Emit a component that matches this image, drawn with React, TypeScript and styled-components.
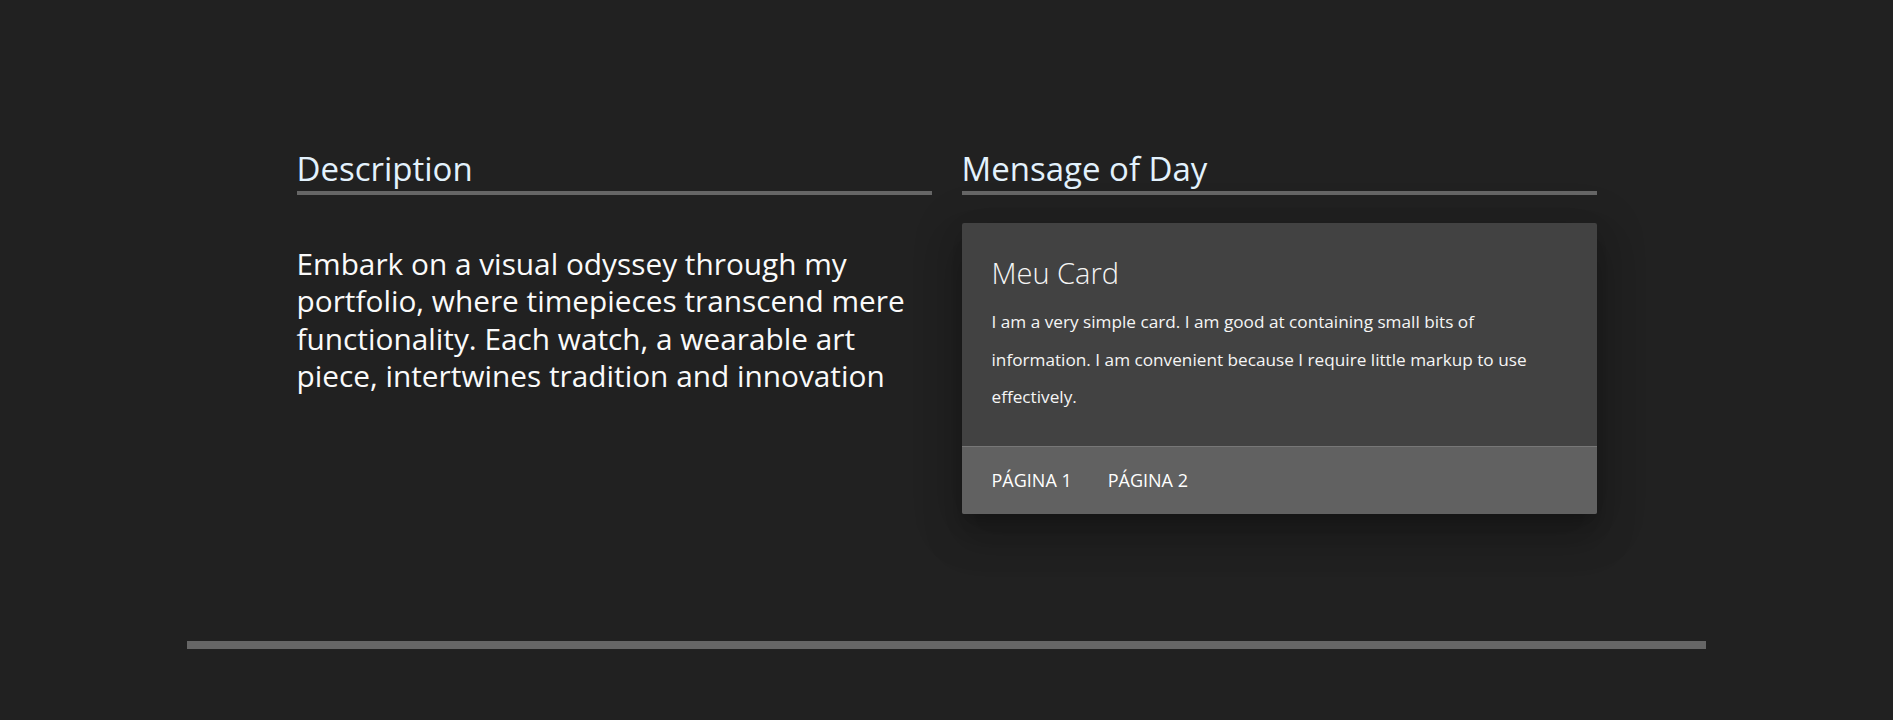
import styled, { createGlobalStyle } from "styled-components";

const GlobalStyle = createGlobalStyle`
  html,
  body {
    margin: 0;
    padding: 0;
    background: #212121;
  }

  body {
    font-family: "Open Sans", "Noto Sans", "Liberation Sans", sans-serif;
    color: #ffffff;
  }

  * {
    box-sizing: border-box;
  }
`;

export const PageWrapp = styled.div`
  min-height: 100vh;
  background: #212121;
  padding-top: 150px;
  padding-bottom: 71px;
`;

export const PageSections = styled.main`
  width: 1300px;
  margin: 0 auto;
  display: grid;
  grid-template-columns: 635px 635px;
  column-gap: 30px;
  align-items: start;
`;

export const Section = styled.section`
  display: flex;
  flex-direction: column;
`;

export const SectionTitle = styled.h4`
  margin: 0;
  padding-bottom: 3px;
  font-size: 33px;
  font-weight: 400;
  line-height: 38px;
  color: #e3f2fd;
  border-bottom: 4px solid #666666;
`;

export const SectionText = styled.p<{ $offset: number }>`
  margin: ${({ $offset }) => $offset}px 0 0;
  font-size: 29.8px;
  line-height: 37.4px;
  color: #fafafa;
`;

export const Card = styled.div`
  margin-top: 28px;
  background: #424242;
  border-radius: 2px;
  overflow: hidden;
  box-shadow: 0 24px 38px 3px rgba(0, 0, 0, 0.16),
    0 9px 46px 8px rgba(0, 0, 0, 0.14), 0 11px 15px -7px rgba(0, 0, 0, 0.22);
`;

export const CardContent = styled.div`
  padding: 30px;
`;

export const CardTitle = styled.span`
  display: block;
  margin-bottom: 10px;
  font-size: 29px;
  font-weight: 300;
  line-height: 40px;
  color: #f5f5f5;
`;

export const CardText = styled.p`
  margin: 0;
  font-size: 17.2px;
  line-height: 37.5px;
  color: #f5f5f5;
`;

export const CardAction = styled.div`
  display: flex;
  align-items: center;
  padding: 20px 30px;
  background: #616161;
  border-top: 1px solid rgba(160, 160, 160, 0.35);
`;

export const CardLink = styled.a`
  margin-right: 36px;
  font-size: 18px;
  line-height: 27px;
  text-transform: uppercase;
  text-decoration: none;
  color: #ffffff;
  cursor: pointer;

  &:last-child {
    margin-right: 0;
  }
`;

export const FooterDivider = styled.hr`
  width: 1519px;
  height: 8px;
  margin: 127px auto 0;
  border: 0;
  background: #666666;
`;

const links = ["Página 1", "Página 2"];

export default function App() {
  return (
    <>
      <GlobalStyle />
      <PageWrapp>
        <PageSections>
          <Section>
            <SectionTitle>Description</SectionTitle>
            <SectionText $offset={50}>
              Embark on a visual odyssey through my portfolio, where timepieces
              transcend mere functionality. Each watch, a wearable art piece,
              intertwines tradition and innovation
            </SectionText>
          </Section>
          <Section>
            <SectionTitle>Mensage of Day</SectionTitle>
            <Card>
              <CardContent>
                <CardTitle>Meu Card</CardTitle>
                <CardText>
                  I am a very simple card. I am good at containing small bits of
                  information. I am convenient because I require little markup
                  to use effectively.
                </CardText>
              </CardContent>
              <CardAction>
                {links.map((link) => (
                  <CardLink key={link} href="#">
                    {link}
                  </CardLink>
                ))}
              </CardAction>
            </Card>
          </Section>
        </PageSections>
        <FooterDivider />
      </PageWrapp>
    </>
  );
}
